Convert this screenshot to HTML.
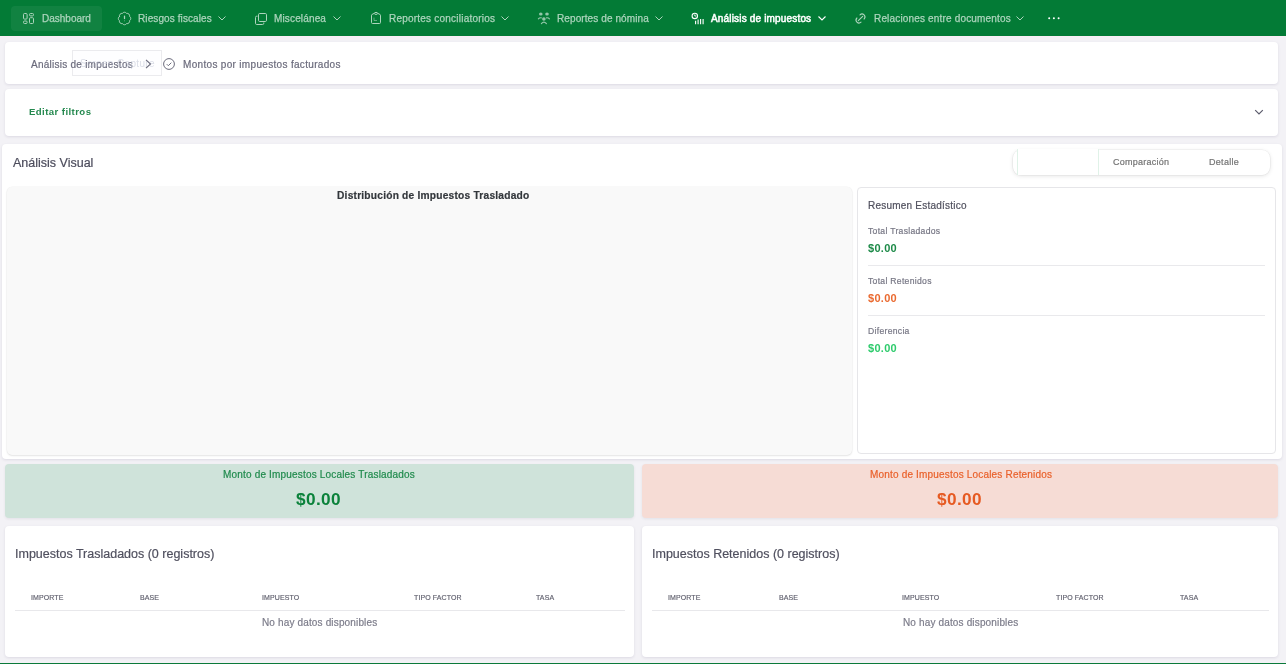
<!DOCTYPE html>
<html><head><meta charset="utf-8">
<style>
*{box-sizing:border-box;margin:0;padding:0}
html,body{width:1286px;height:664px;overflow:hidden;background:#f3f2f6;font-family:"Liberation Sans",sans-serif;-webkit-font-smoothing:antialiased}
.t{will-change:transform;-webkit-text-stroke:.2px currentColor}
.a{position:absolute}
.t{position:absolute;white-space:nowrap;line-height:1}
#nav{position:absolute;left:0;top:0;width:1286px;height:36px;background:#037b36}
.nv{color:#acd4bc;font-size:10px;-webkit-text-stroke:.25px #acd4bc}
.ic{position:absolute;overflow:visible}
.card{position:absolute;background:#fff;border-radius:4px;box-shadow:0 1px 3px rgba(40,30,70,.11)}
</style></head><body>
<div id="nav">
  <div class="a" style="left:11px;top:6px;width:91px;height:25px;border-radius:4px;background:rgba(255,255,255,.06)"></div>
  <!-- dashboard icon -->
  <svg class="ic" style="left:23px;top:13px" width="11" height="11" viewBox="0 0 11 11" fill="none" stroke="#acd4bc" stroke-width="1"><rect x=".5" y=".5" width="3.6" height="5.6" rx="1"/><rect x="6.5" y=".5" width="4" height="2.4" rx="1"/><rect x="6.5" y="4.7" width="4" height="5.8" rx="1"/><rect x=".5" y="8" width="3.6" height="2.5" rx="1"/></svg>
  <div class="t nv" style="left:42px;top:14px">Dashboard</div>

  <svg class="ic" style="left:116.5px;top:11px" width="15" height="15" viewBox="0 0 24 24" fill="none" stroke="#acd4bc" stroke-width="1.5" stroke-linecap="round"><path d="M3.85 8.62a4 4 0 0 1 4.78-4.77 4 4 0 0 1 6.74 0 4 4 0 0 1 4.78 4.78 4 4 0 0 1 0 6.74 4 4 0 0 1-4.77 4.78 4 4 0 0 1-6.75 0 4 4 0 0 1-4.78-4.77 4 4 0 0 1 0-6.76Z"/><path d="M12 8v4" stroke-width="2"/><path d="M12 15.6h.01" stroke-width="1.8" opacity=".6"/></svg>
  <div class="t nv" style="left:137.5px;top:14px;letter-spacing:.1px">Riesgos fiscales</div>
  <svg class="ic" style="left:218px;top:16px" width="8" height="5" viewBox="0 0 8 5" fill="none" stroke="#acd4bc" stroke-width="1"><path d="M.5 .5L4 4 7.5 .5"/></svg>

  <svg class="ic" style="left:255px;top:12.5px" width="12" height="12" viewBox="0 0 12 12" fill="none" stroke="#acd4bc" stroke-width="1"><rect x="3.5" y=".5" width="8" height="8" rx="1.2"/><path d="M2.5 3.2h-.8a1.2 1.2 0 0 0-1.2 1.2v5.9a1.2 1.2 0 0 0 1.2 1.2h5.9a1.2 1.2 0 0 0 1.2-1.2v-.8"/></svg>
  <div class="t nv" style="left:274px;top:14px;letter-spacing:.15px">Miscelánea</div>
  <svg class="ic" style="left:333px;top:16px" width="8" height="5" viewBox="0 0 8 5" fill="none" stroke="#acd4bc" stroke-width="1"><path d="M.5 .5L4 4 7.5 .5"/></svg>

  <svg class="ic" style="left:371px;top:12.3px" width="10" height="12" viewBox="0 0 10 12" fill="none" stroke="#acd4bc" stroke-width="1"><path d="M3.2 1.4L.9 2.5a.8.8 0 0 0-.4.7v7.3a1 1 0 0 0 1 1h7a1 1 0 0 0 1-1V3.2a.8.8 0 0 0-.4-.7L6.8 1.4"/><ellipse cx="5" cy="1.4" rx="1.7" ry="1"/><path d="M3 5.6v2.9h3" stroke-width=".9" opacity=".6"/></svg>
  <div class="t nv" style="left:389px;top:14px;letter-spacing:.22px">Reportes conciliatorios</div>
  <svg class="ic" style="left:501px;top:16px" width="8" height="5" viewBox="0 0 8 5" fill="none" stroke="#acd4bc" stroke-width="1"><path d="M.5 .5L4 4 7.5 .5"/></svg>

  <svg class="ic" style="left:537px;top:11px" width="14" height="14" viewBox="0 0 14 14" fill="none" stroke="#acd4bc" stroke-width="1.2" stroke-linecap="round"><g fill="#acd4bc" stroke="none" opacity=".85"><ellipse cx="3.8" cy="3.1" rx="1.8" ry="1.5"/><ellipse cx="10" cy="3.1" rx="1.8" ry="1.5"/><circle cx="6.9" cy="8" r="1.8"/></g><path d="M1.4 7.8Q2.3 6.6 4.3 6.8M12.4 7.8Q11.5 6.6 9.5 6.8M4.4 12.6Q6.9 9.6 9.4 12.6" opacity=".85"/></svg>
  <div class="t nv" style="left:557px;top:14px;letter-spacing:.1px">Reportes de nómina</div>
  <svg class="ic" style="left:655px;top:16px" width="8" height="5" viewBox="0 0 8 5" fill="none" stroke="#acd4bc" stroke-width="1"><path d="M.5 .5L4 4 7.5 .5"/></svg>

  <svg class="ic" style="left:691px;top:12px" width="14" height="13" viewBox="0 0 14 13" fill="none" stroke="#fff" stroke-width="1.1"><circle cx="3.8" cy="3.9" r="2.7"/><path d="M3.8 2.4v1.6h1.4" stroke-width=".9"/><path d="M4.6 12.3V8.8M7.1 12.3V7.6M9.6 12.3V7M12.1 12.3V7"/></svg>
  <div class="t" style="left:711px;top:14px;color:#fff;font-size:10px;-webkit-text-stroke:.5px #fff;letter-spacing:.17px">Análisis de impuestos</div>
  <svg class="ic" style="left:818px;top:16px" width="8" height="5" viewBox="0 0 8 5" fill="none" stroke="#fff" stroke-width="1.1"><path d="M.5 .5L4 4 7.5 .5"/></svg>

  <svg class="ic" style="left:855px;top:13px" width="11" height="11" viewBox="0 0 11 11" fill="none" stroke="#acd4bc" stroke-width="1.1" stroke-linecap="round"><path d="M5 1.9A2.9 2.9 0 0 1 9.1 6M1.9 5A2.9 2.9 0 0 0 6 9.1M3.3 7.7L7.7 3.3"/></svg>
  <div class="t nv" style="left:873.5px;top:14px;letter-spacing:.17px">Relaciones entre documentos</div>
  <svg class="ic" style="left:1016px;top:16px" width="8" height="5" viewBox="0 0 8 5" fill="none" stroke="#acd4bc" stroke-width="1"><path d="M.5 .5L4 4 7.5 .5"/></svg>

  <svg class="ic" style="left:1048px;top:17px" width="12" height="3" viewBox="0 0 12 3"><circle cx="1.2" cy="1.3" r="1" fill="#fff"/><circle cx="5.9" cy="1.3" r="1" fill="#fff"/><circle cx="10.6" cy="1.3" r="1" fill="#fff"/></svg>
</div>
<div class="a" style="left:0;top:36px;width:1286px;height:1px;background:#fbeef6"></div>

<!-- breadcrumb card -->
<div class="card" style="left:5px;top:42px;width:1273px;height:41.5px"></div>
<div class="a" style="left:72px;top:50px;width:90px;height:26px;border:1px solid #ebebee;background:rgba(250,250,252,.15)"></div>
<div class="t" style="left:31px;top:59.7px;font-size:10px;color:#6b6b7c;letter-spacing:.25px">Análisis de impuestos</div>
<div class="t" style="left:80px;top:59px;font-size:10px;color:rgba(195,200,215,.6);letter-spacing:.35px;-webkit-text-stroke:0">Screen Capture</div>
<svg class="ic" style="left:145px;top:59px" width="7" height="10" viewBox="0 0 7 10" fill="none" stroke="#6b6b7c" stroke-width="1.1"><path d="M1 .8L5.5 5 1 9.2"/></svg>
<svg class="ic" style="left:163px;top:58px" width="12" height="12" viewBox="0 0 12 12" fill="none" stroke="#6b6b7c" stroke-width="1"><circle cx="6" cy="6" r="5.4"/><path d="M3.8 6.2l1.5 1.5 3-3"/></svg>
<div class="t" style="left:182.5px;top:59.7px;font-size:10px;color:#6b6b7c;letter-spacing:.32px">Montos por impuestos facturados</div>

<!-- filter card -->
<div class="card" style="left:5px;top:89px;width:1273px;height:47px"></div>
<div class="t" style="left:29px;top:107px;font-size:9.6px;font-weight:700;color:#25894f;letter-spacing:.42px;-webkit-text-stroke:0">Editar filtros</div>
<svg class="ic" style="left:1254px;top:109px" width="10" height="7" viewBox="0 0 10 7" fill="none" stroke="#5c5c6c" stroke-width="1.2"><path d="M1.2 1.2L5 5 8.8 1.2"/></svg>

<!-- analysis visual card -->
<div class="card" style="left:2px;top:144px;width:1280px;height:315px"></div>
<div class="t" style="left:13px;top:157px;font-size:12.5px;color:#4c4c5c">Análisis Visual</div>
<div class="a" style="left:1012.5px;top:149.5px;width:257.5px;height:25.7px;border-radius:8px;background:#fff;box-shadow:0 0 0 .6px rgba(0,0,0,.06),0 1px 4px rgba(0,0,0,.11)"></div>
<div class="a" style="left:1017px;top:149px;width:82px;height:26px;background:#fff;border-left:1.5px solid #e0f2e8;border-right:1.5px solid #e0f2e8"></div>
<div class="t" style="left:1113px;top:158px;font-size:9px;color:#747474;letter-spacing:.25px">Comparación</div>
<div class="t" style="left:1209px;top:158px;font-size:9px;color:#747474;letter-spacing:.3px">Detalle</div>

<div class="a" style="left:6.5px;top:186.5px;width:845px;height:268px;background:#f9f9f9;border-radius:5px;box-shadow:0 0 0 .5px rgba(0,0,0,.04),0 1px 2px rgba(0,0,0,.09)"></div>
<div class="t" style="left:336.5px;top:191px;font-size:10.2px;font-weight:700;color:#33373c;-webkit-text-stroke:.2px #33373c;letter-spacing:.22px">Distribución de Impuestos Trasladado</div>

<div class="a" style="left:857px;top:187px;width:419px;height:267px;background:#fff;border:1px solid #e6e6e9;border-radius:4px"></div>
<div class="t" style="left:868px;top:201px;font-size:10px;color:#50505e;letter-spacing:.22px">Resumen Estadístico</div>
<div class="t" style="left:868px;top:226.5px;font-size:8.6px;color:#777785;letter-spacing:.3px">Total Trasladados</div>
<div class="t" style="left:868px;top:242.6px;font-size:11px;font-weight:700;letter-spacing:.3px;-webkit-text-stroke:0;color:#1d8a48">$0.00</div>
<div class="a" style="left:868px;top:265px;width:397px;height:1px;background:#e9e9ec"></div>
<div class="t" style="left:868px;top:277.3px;font-size:8.6px;color:#777785;letter-spacing:.3px">Total Retenidos</div>
<div class="t" style="left:868px;top:293px;font-size:11px;font-weight:700;letter-spacing:.3px;-webkit-text-stroke:0;color:#ea6a30">$0.00</div>
<div class="a" style="left:868px;top:315px;width:397px;height:1px;background:#e9e9ec"></div>
<div class="t" style="left:868px;top:327.3px;font-size:8.6px;color:#777785;letter-spacing:.3px">Diferencia</div>
<div class="t" style="left:868px;top:342.8px;font-size:11px;font-weight:700;letter-spacing:.3px;-webkit-text-stroke:0;color:#2ecb6c">$0.00</div>

<!-- monto cards -->
<div class="a" style="left:5px;top:464px;width:628.5px;height:54px;background:#cfe3da;border-radius:4px;box-shadow:0 1px 3px rgba(40,40,60,.08)"></div>
<div class="t" style="left:223px;top:470px;font-size:10px;color:#1f8a4c;letter-spacing:.18px">Monto de Impuestos Locales Trasladados</div>
<div class="t" style="left:296px;top:491px;font-size:17.2px;font-weight:700;-webkit-text-stroke:0;color:#0b823b;letter-spacing:.4px">$0.00</div>
<div class="a" style="left:642px;top:464px;width:636px;height:54px;background:#f6dcd5;border-radius:4px;box-shadow:0 1px 3px rgba(40,40,60,.08)"></div>
<div class="t" style="left:869.5px;top:470px;font-size:10px;color:#e9602a;letter-spacing:.18px">Monto de Impuestos Locales Retenidos</div>
<div class="t" style="left:937px;top:491px;font-size:17.2px;font-weight:700;-webkit-text-stroke:0;color:#e65a22;letter-spacing:.4px">$0.00</div>

<!-- table cards -->
<div class="card" style="left:5px;top:526px;width:628.5px;height:131px"></div>
<div class="t" style="left:14.8px;top:547.5px;font-size:12.5px;color:#50505f">Impuestos Trasladados (0 registros)</div>
<div class="t" style="left:31px;top:593.5px;font-size:7px;color:#5e5e6c;-webkit-text-stroke:.15px #5e5e6c;letter-spacing:.1px">IMPORTE</div>
<div class="t" style="left:140px;top:593.5px;font-size:7px;color:#5e5e6c;-webkit-text-stroke:.15px #5e5e6c;letter-spacing:.1px">BASE</div>
<div class="t" style="left:261.5px;top:593.5px;font-size:7px;color:#5e5e6c;-webkit-text-stroke:.15px #5e5e6c;letter-spacing:.1px">IMPUESTO</div>
<div class="t" style="left:413.5px;top:593.5px;font-size:7px;color:#5e5e6c;-webkit-text-stroke:.15px #5e5e6c;letter-spacing:.1px">TIPO FACTOR</div>
<div class="t" style="left:535.5px;top:593.5px;font-size:7px;color:#5e5e6c;-webkit-text-stroke:.15px #5e5e6c;letter-spacing:.1px">TASA</div>
<div class="a" style="left:14.5px;top:610px;width:610px;height:1px;background:#e8e8eb"></div>
<div class="t" style="left:261.5px;top:617.5px;font-size:10px;color:#7c7c8a;letter-spacing:.15px">No hay datos disponibles</div>

<div class="card" style="left:642px;top:526px;width:636px;height:131px"></div>
<div class="t" style="left:651.8px;top:547.5px;font-size:12.5px;color:#50505f">Impuestos Retenidos (0 registros)</div>
<div class="t" style="left:668px;top:593.5px;font-size:7px;color:#5e5e6c;-webkit-text-stroke:.15px #5e5e6c;letter-spacing:.1px">IMPORTE</div>
<div class="t" style="left:778.5px;top:593.5px;font-size:7px;color:#5e5e6c;-webkit-text-stroke:.15px #5e5e6c;letter-spacing:.1px">BASE</div>
<div class="t" style="left:901.5px;top:593.5px;font-size:7px;color:#5e5e6c;-webkit-text-stroke:.15px #5e5e6c;letter-spacing:.1px">IMPUESTO</div>
<div class="t" style="left:1056px;top:593.5px;font-size:7px;color:#5e5e6c;-webkit-text-stroke:.15px #5e5e6c;letter-spacing:.1px">TIPO FACTOR</div>
<div class="t" style="left:1179.5px;top:593.5px;font-size:7px;color:#5e5e6c;-webkit-text-stroke:.15px #5e5e6c;letter-spacing:.1px">TASA</div>
<div class="a" style="left:652px;top:610px;width:617px;height:1px;background:#e8e8eb"></div>
<div class="t" style="left:902.5px;top:617.5px;font-size:10px;color:#7c7c8a;letter-spacing:.15px">No hay datos disponibles</div>

<div class="a" style="left:0;top:662.7px;width:1286px;height:2px;background:#0b7a3a"></div>
</body></html>
